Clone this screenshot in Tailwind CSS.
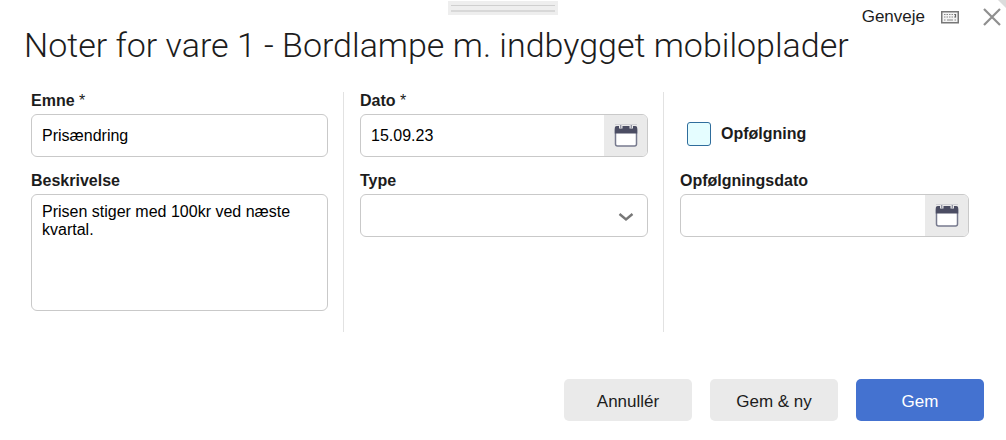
<!DOCTYPE html>
<html lang="da">
<head>
  <meta charset="UTF-8">
  <meta name="viewport" content="width=device-width, initial-scale=1">
  <title>Noter for vare 1</title>
  <script src="https://cdn.jsdelivr.net/npm/@tailwindcss/browser@4"></script>
</head>
<body class="bg-white font-['Liberation_Sans',Arial,sans-serif] text-[#1c1c1c]">

  <div class="relative min-h-screen">

    <!-- folded corner -->
    <div class="absolute top-0 right-0 w-2 h-2 bg-[#dcdcdc] [clip-path:polygon(0_0,100%_0,100%_100%)]"></div>

    <!-- top bar: drag handle, shortcuts, close -->
    <header class="grid grid-cols-[1fr_auto_1fr] items-start h-7 pt-px">
      <div class="col-start-2 w-[110px] h-[14px] bg-[#eeeeee] px-[3px] pt-1 pb-[3px] flex flex-col justify-between">
        <div class="h-px bg-[#cfcfcf]"></div>
        <div class="h-[2px] bg-[#d8d8d8]"></div>
      </div>
      <div class="flex items-center justify-end h-8 pr-[3px]">
        <button type="button" class="flex items-center gap-4 text-[17px] leading-5">
          Genveje
          <svg class="w-[18px] h-[14px]" viewBox="0 0 18 14" fill="none">
            <rect x="0.75" y="1.75" width="16.5" height="11" fill="#f4f4f4" stroke="#777" stroke-width="1.5"/>
            <path d="M3 4.5h12M3 7h12" stroke="#888" stroke-width="1.2" stroke-dasharray="1.5 1"/>
            <path d="M3 10h1.500M6 10h6M13.500 10h1.500" stroke="#888" stroke-width="1.2"/>
            <path d="M14.500 4v3.500" stroke="#666" stroke-width="1.2"/>
          </svg>
        </button>
        <button type="button" aria-label="Luk" class="ml-[22px]">
          <svg class="w-[22px] h-[22px]" viewBox="0 0 22 22" stroke="#8f8f8f" stroke-width="2.2">
            <path d="M3 3l16 16M19 3L3 19"/>
          </svg>
        </button>
      </div>
    </header>

    <h1 class="pl-6 font-[Roboto] font-light text-[34px] leading-[34px]">Noter for vare 1 - Bordlampe m. indbygget mobiloplader</h1>

    <form class="pl-6 pr-[22px] pt-[30px] text-base leading-[18px]">
      <div class="grid grid-cols-3 h-60">

        <div class="flex flex-col pl-[7px] pr-[15px] border-r border-[#e2e2e2]">
          <label for="emne" class="font-bold">Emne <span class="font-normal">*</span></label>
          <input id="emne" type="text" value="Prisændring" class="mt-1 h-[43px] w-full px-2.5 border border-[#c9c9c9] rounded-md text-black">
          <label for="beskrivelse" class="mt-[15px] font-bold">Beskrivelse</label>
          <textarea id="beskrivelse" class="mt-1 h-[117px] w-full px-2.5 py-2 border border-[#c9c9c9] rounded-md text-black resize-none">Prisen stiger med 100kr ved næste kvartal.</textarea>
        </div>

        <div class="flex flex-col pl-4 pr-[15px] border-r border-[#e2e2e2]">
          <label for="dato" class="font-bold">Dato <span class="font-normal">*</span></label>
          <div class="mt-1 h-[43px] flex border border-[#c9c9c9] rounded-md overflow-hidden">
            <input id="dato" type="text" value="15.09.23" class="min-w-0 flex-1 px-2.5 text-black">
            <button type="button" aria-label="Vælg dato" class="w-[43px] bg-[#eaeaea] flex items-center justify-center">
              <svg class="w-6 h-6" viewBox="0 0 24 24">
                <rect x="1.500" y="4" width="21" height="18" rx="2" fill="#fff" stroke="#777a8e" stroke-width="1.5"/>
                <path d="M0.750 9.500V4a2 2 0 0 1 2-2h18.500a2 2 0 0 1 2 2v5.500z" fill="#4b4d63"/>
                <path d="M5 1h3.500v3.500H5zM15.500 1H19v3.500h-3.500z" fill="#eaeaea"/>
                <path d="M6.750 1v3M17.250 1v3" stroke="#777a8e" stroke-width="1"/>
                <path d="M1 0.500h22" stroke="#cfcfd4" stroke-width="1"/>
              </svg>
            </button>
          </div>
          <label for="type" class="mt-[15px] font-bold">Type</label>
          <div class="relative mt-1">
            <select id="type" class="appearance-none block h-[43px] w-full px-2.5 border border-[#c9c9c9] rounded-md">
              <option></option>
            </select>
            <svg class="absolute right-3.5 top-[18px] w-4 h-3 pointer-events-none" viewBox="0 0 16 12" fill="none" stroke="#777" stroke-width="2.4">
              <path d="M1.500 2L8 7.500L14.500 2"/>
            </svg>
          </div>
        </div>

        <div class="flex flex-col pl-4 pr-[15px]">
          <label class="mt-[30px] ml-[7px] flex items-center gap-2.5 font-bold">
            <input type="checkbox" class="appearance-none w-6 h-6 bg-[#e5fdff] border border-[#2f6d9c] rounded-[3px]">
            Opfølgning
          </label>
          <label for="opfdato" class="mt-[26px] font-bold">Opfølgningsdato</label>
          <div class="mt-1 h-[43px] flex border border-[#c9c9c9] rounded-md overflow-hidden">
            <input id="opfdato" type="text" class="min-w-0 flex-1 px-2.5 text-black">
            <button type="button" aria-label="Vælg opfølgningsdato" class="w-[43px] bg-[#eaeaea] flex items-center justify-center">
              <svg class="w-6 h-6" viewBox="0 0 24 24">
                <rect x="1.500" y="4" width="21" height="18" rx="2" fill="#fff" stroke="#777a8e" stroke-width="1.5"/>
                <path d="M0.750 9.500V4a2 2 0 0 1 2-2h18.500a2 2 0 0 1 2 2v5.500z" fill="#4b4d63"/>
                <path d="M5 1h3.500v3.500H5zM15.500 1H19v3.500h-3.500z" fill="#eaeaea"/>
                <path d="M6.750 1v3M17.250 1v3" stroke="#777a8e" stroke-width="1"/>
                <path d="M1 0.500h22" stroke="#cfcfd4" stroke-width="1"/>
              </svg>
            </button>
          </div>
        </div>
      </div>

      <div class="mt-[47px] pb-4 flex justify-end gap-[18px] text-[17px]">
        <button type="button" class="w-32 h-[42px] pt-1 rounded-[5px] bg-[#eaeaea]">Annullér</button>
        <button type="button" class="w-32 h-[42px] pt-1 rounded-[5px] bg-[#eaeaea]">Gem &amp; ny</button>
        <button type="submit" class="w-32 h-[42px] pt-1 rounded-[5px] bg-[#4472d0] text-white">Gem</button>
      </div>
    </form>
  </div>

</body>
</html>
